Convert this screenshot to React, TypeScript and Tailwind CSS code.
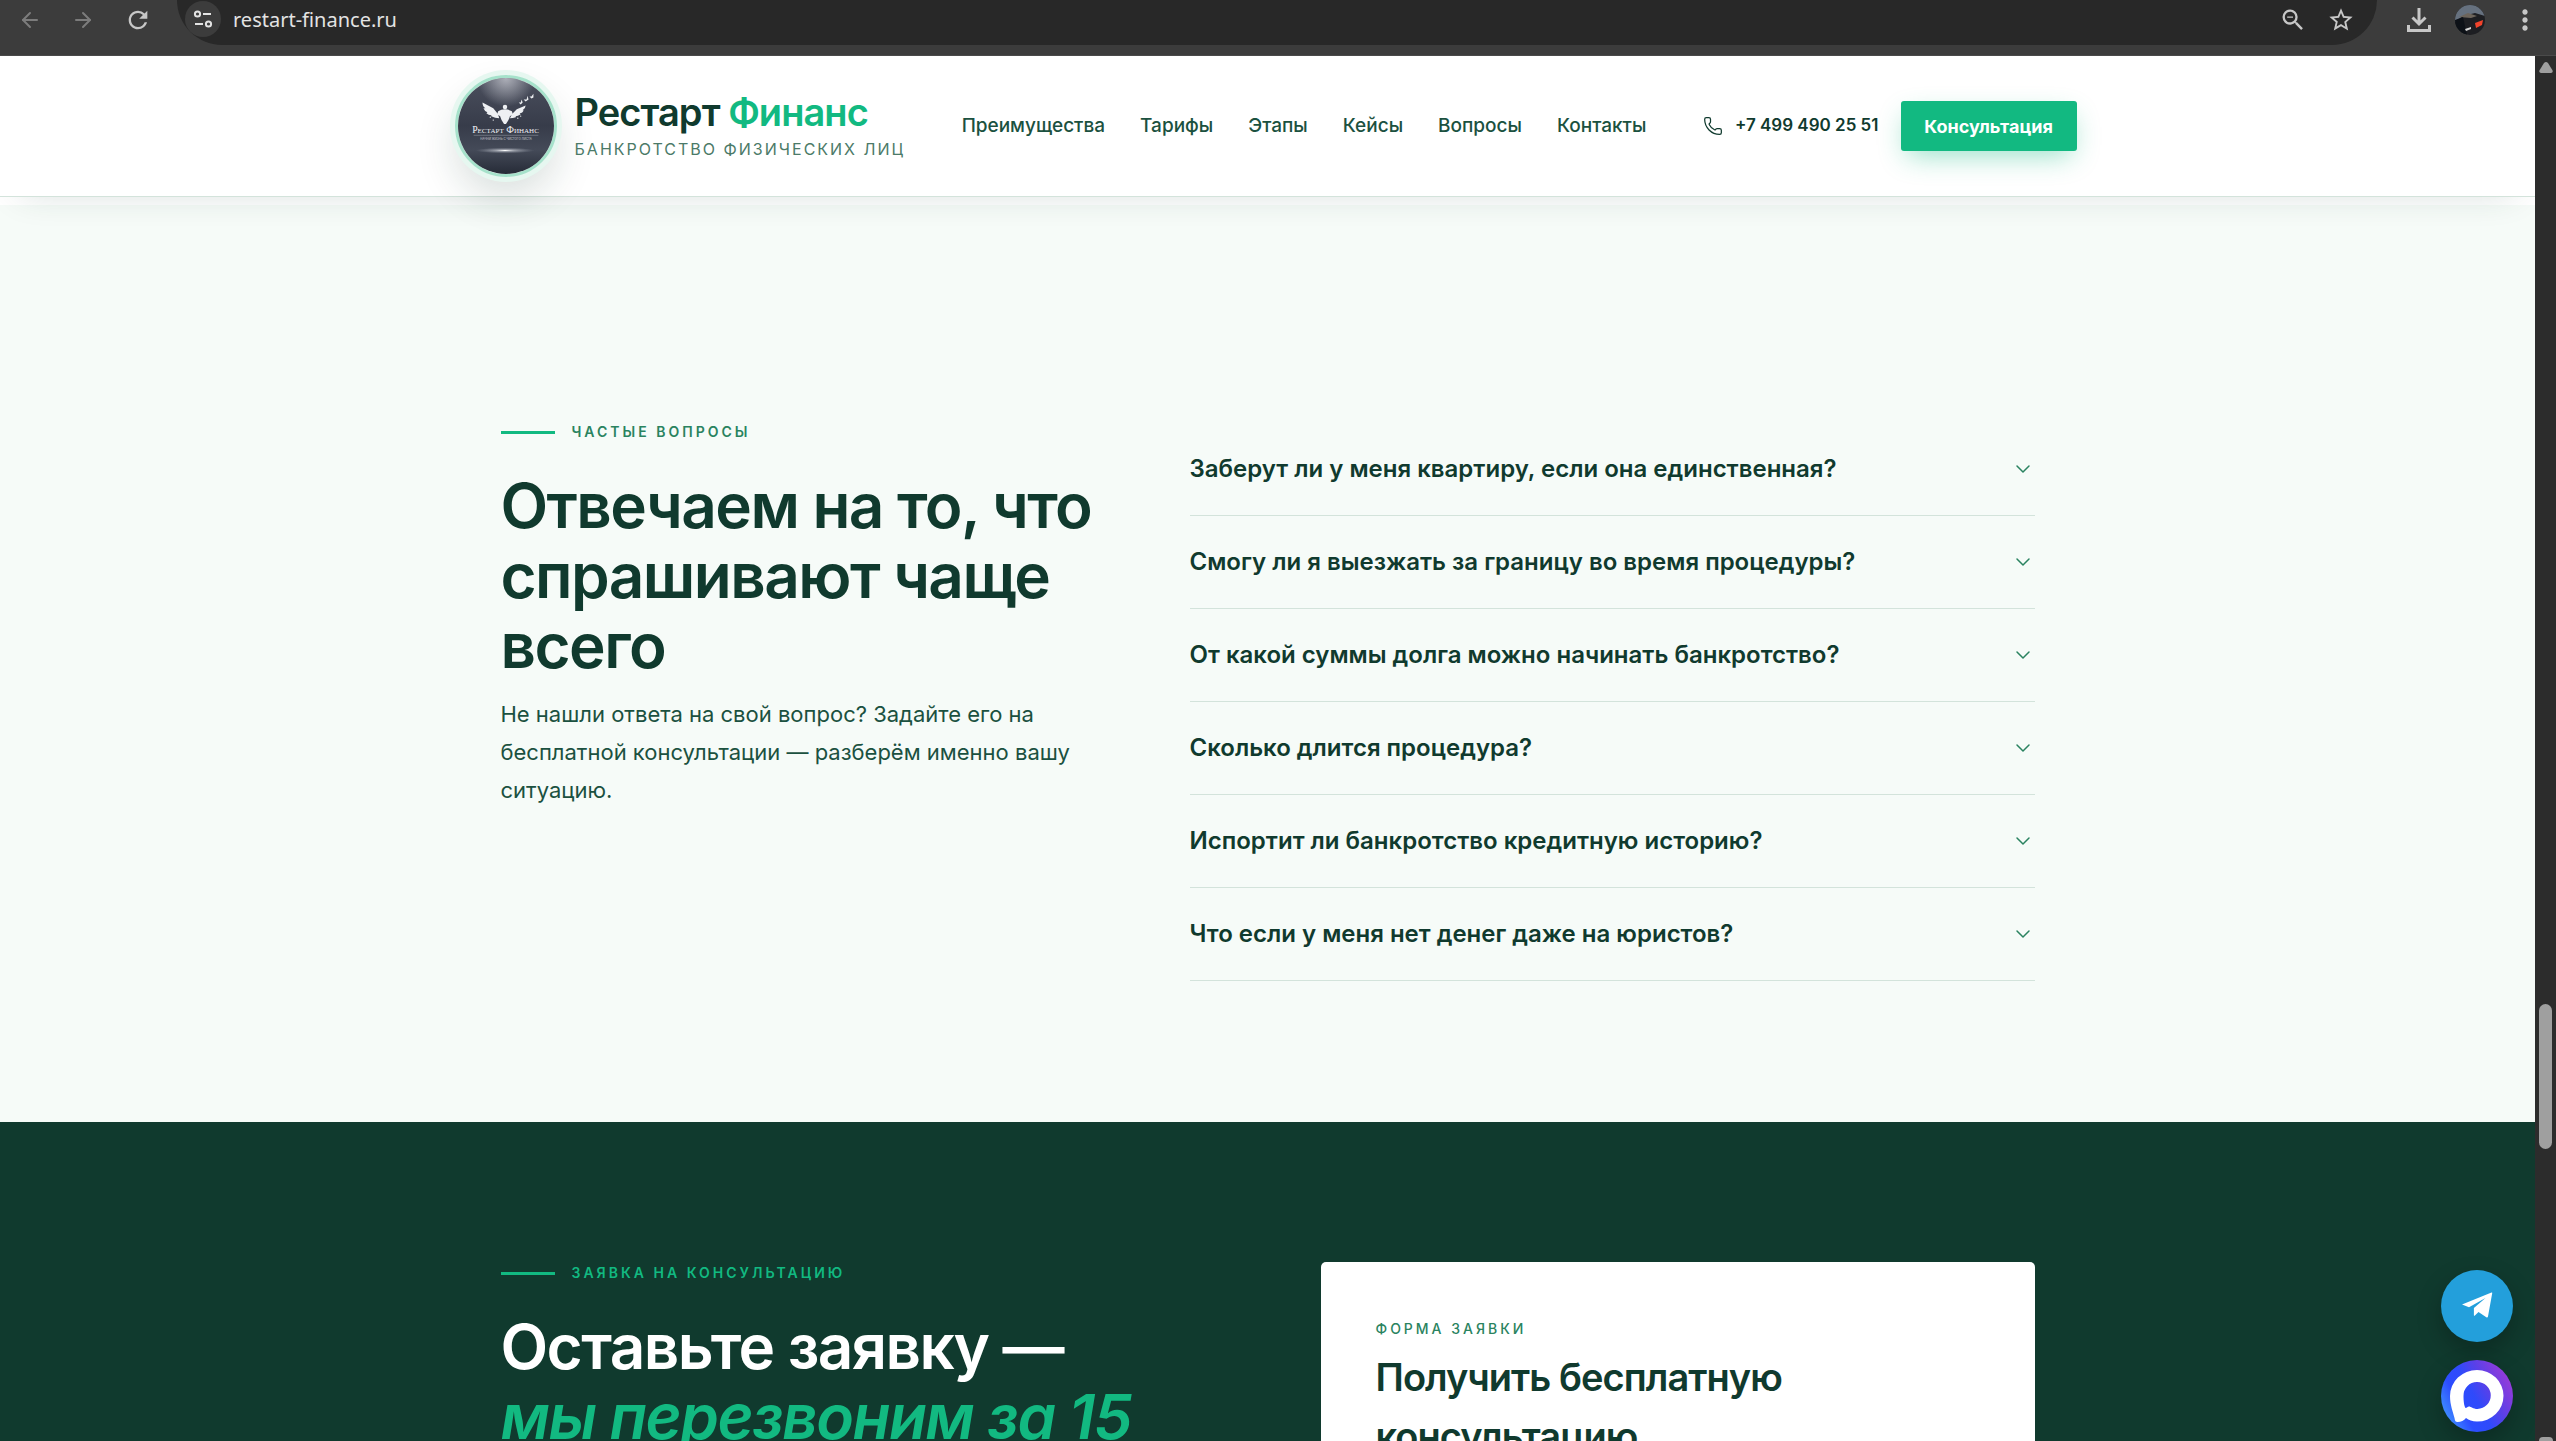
import React, { useState } from 'react'
import { ArrowLeft, ArrowRight, ChevronDown, Phone } from 'lucide-react'
import { MdMoreVert, MdRefresh, MdStarBorder, MdZoomOut } from 'react-icons/md'

const navItems = [
  { href: '#advantages', label: 'Преимущества' },
  { href: '#prices', label: 'Тарифы' },
  { href: '#steps', label: 'Этапы' },
  { href: '#cases', label: 'Кейсы' },
  { href: '#faq', label: 'Вопросы' },
  { href: '#contacts', label: 'Контакты' },
]

const questions = [
  'Заберут ли у меня квартиру, если она единственная?',
  'Смогу ли я выезжать за границу во время процедуры?',
  'От какой суммы долга можно начинать банкротство?',
  'Сколько длится процедура?',
  'Испортит ли банкротство кредитную историю?',
  'Что если у меня нет денег даже на юристов?',
]

function BrowserBar() {
  return (
    <div className="flex h-14 shrink-0 items-start border-b border-[#4a4a4a] bg-[#3c3c3c] text-[#c7c7c7]">
      <div className="flex h-10 w-[177px] shrink-0 items-center gap-[29px] pl-[18px]">
        <button aria-label="Назад" className="text-[#7c7c7c]"><ArrowLeft className="size-6" strokeWidth={2} /></button>
        <button aria-label="Вперёд" className="text-[#7c7c7c]"><ArrowRight className="size-6" strokeWidth={2} /></button>
        <button aria-label="Обновить"><MdRefresh className="size-7" /></button>
      </div>
      <div className="flex h-[45px] flex-1 items-start rounded-b-full bg-[#282828] pr-[22px] pl-2">
        <button aria-label="Сведения о сайте" className="mt-px flex size-9 items-center justify-center rounded-full bg-[#3c3c3c]">
          <svg viewBox="0 0 20 20" className="size-5" fill="none" stroke="#e3e3e3" strokeWidth="2">
            <circle cx="4.5" cy="5" r="2.6" />
            <path d="M10 5h8M2 15h8" />
            <circle cx="15.5" cy="15" r="2.6" />
          </svg>
        </button>
        <input
          aria-label="Адресная строка"
          defaultValue="restart-finance.ru"
          className="ml-3 h-[38px] min-w-0 flex-1 bg-transparent font-['Noto_Sans',sans-serif] text-xl text-[#e3e3e3] outline-none"
        />
        <div className="flex h-10 items-center gap-5">
          <button aria-label="Масштаб"><MdZoomOut className="size-7" /></button>
          <button aria-label="В закладки"><MdStarBorder className="size-7" /></button>
        </div>
      </div>
      <div className="flex h-10 shrink-0 items-center gap-6 pr-[15px] pl-[30px]">
        <button aria-label="Загрузки">
          <svg viewBox="0 0 24 24" className="size-6" fill="none" stroke="currentColor" strokeWidth="3">
            <path d="M12 0v16M5.500 9.500L12 16l6.500-6.500M1.500 17v5.500h21V17" />
          </svg>
        </button>
        <button aria-label="Профиль">
          <svg viewBox="0 0 30 30" className="size-[30px]">
            <defs>
              <clipPath id="avatar"><circle cx="15" cy="15" r="15" /></clipPath>
            </defs>
            <g clipPath="url(#avatar)">
              <rect width="30" height="30" fill="#1d1e22" />
              <path d="M0 0h30v11L20 8 8 11 0 17z" fill="#66717f" />
              <path d="M4 12l9-4 9 3-6 2z" fill="#6d655c" />
              <path d="M0 15l8-3 4 18H0z" fill="#0d1117" />
              <path d="M20 18l8-3-1 5-6 3z" fill="#f0432b" />
              <path d="M10 24l6-2v2l-5 2z" fill="#d7d7d7" />
            </g>
          </svg>
        </button>
        <button aria-label="Меню"><MdMoreVert className="size-8" /></button>
      </div>
    </div>
  )
}

function LogoMark() {
  return (
    <svg viewBox="0 0 98 98" className="size-full">
      <defs>
        <linearGradient id="disc" x1="0" y1="0" x2="0" y2="1">
          <stop offset="0" stopColor="#4b4f5d" />
          <stop offset="0.5" stopColor="#373c4a" />
          <stop offset="0.75" stopColor="#444a58" />
          <stop offset="1" stopColor="#262b37" />
        </linearGradient>
        <radialGradient id="beam" cx="0.5" cy="0" r="0.3">
          <stop offset="0" stopColor="#b9bbc4" stopOpacity="0.9" />
          <stop offset="1" stopColor="#b9bbc4" stopOpacity="0" />
        </radialGradient>
        <radialGradient id="flare">
          <stop offset="0" stopColor="#fff" />
          <stop offset="0.3" stopColor="#d6d9e0" stopOpacity="0.6" />
          <stop offset="1" stopColor="#9aa0ad" stopOpacity="0" />
        </radialGradient>
      </defs>
      <circle cx="49" cy="49" r="49" fill="url(#disc)" />
      <circle cx="49" cy="49" r="49" fill="url(#beam)" />
      <ellipse cx="48" cy="74" rx="30" ry="3" fill="url(#flare)" />
      <g fill="#eef0f3">
        <circle cx="48" cy="29.500" r="2.300" />
        <path d="M41 34q3-2 7-2t7 2l1 3-3 2q-1 4-4 8h-2q-3-4-4-8l-3-2z" />
        <path d="M41 37L36 31 25 25q0 4 3 6l-2 0q1 3 4 4l-1 1q2 2 5 2l0 1q4 2 8 2z" />
        <path d="M55 37l5-5 9-4q0 3-3 5l1 0q-1 3-4 3l1 1q-3 2-5 2l0 1q-3 1-6 1z" />
        <path d="M62 25l2 0 1-3 1 3-2 2zM67 22l3 0 1-4 1 4-3 2zM73 19l2 0 2-3 0 4-2 1z" />
        <circle cx="33" cy="40" r="0.7" />
        <circle cx="36" cy="43" r="0.7" />
        <circle cx="61" cy="41" r="0.7" />
        <circle cx="64" cy="39" r="0.6" />
      </g>
      <text x="48.500" y="56" textAnchor="middle" fontSize="10" fill="#f1f2f5" className="font-['Liberation_Serif',serif]" style={{ fontVariant: 'small-caps' }}>Рестарт Финанс</text>
      <path d="M16 58.500h66" stroke="#8d929d" strokeWidth="0.6" />
      <text x="49" y="63" textAnchor="middle" fontSize="3" fill="#c9ccd3">НАЧНИ ЖИЗНЬ С ЧИСТОГО ЛИСТА</text>
    </svg>
  )
}

function Header() {
  return (
    <header className="relative z-10 border-b border-[#d3e3db] bg-white shadow-[0_14px_36px_-20px_rgba(16,58,46,0.2)]">
      <div className="mx-auto flex h-[140px] max-w-[1626px] items-center pr-1">
        <a href="#top" className="flex items-center gap-[18px]">
          <div className="size-[102px] rounded-full border-3 border-[#a6e2cb] shadow-[0_0_0_5px_#e6f7f0,0_20px_40px_rgba(16,58,46,0.16)]">
            <LogoMark />
          </div>
          <div>
            <div className="text-[38px] leading-[46px] font-semibold tracking-tight text-[#103a2e]">
              Рестарт <span className="text-[#12b981]">Финанс</span>
            </div>
            <div className="text-[16px] leading-[28px] tracking-[2px] text-[#4b7a68] uppercase">Банкротство физических лиц</div>
          </div>
        </a>
        <nav className="ml-auto flex gap-[35px] text-[19px] font-medium text-[#1b5140]">
          {navItems.map((item) => (
            <a key={item.href} href={item.href}>{item.label}</a>
          ))}
        </nav>
        <a href="tel:+74994902551" className="ml-auto flex items-center gap-3 text-[17px] font-semibold text-[#103a2e]">
          <Phone className="size-5" strokeWidth={1.5} />
          +7 499 490 25 51
        </a>
        <a href="#request" className="ml-[22px] flex h-[50px] w-44 items-center justify-center rounded-[3px] bg-[#12b981] text-[18px] font-bold text-white shadow-[0_10px_28px_-6px_rgba(18,185,129,0.45)]">
          Консультация
        </a>
      </div>
    </header>
  )
}

function Eyebrow({ children, className }: { children: React.ReactNode; className: string }) {
  return (
    <div className={`flex items-center gap-[17px] text-[14px] leading-[22px] font-semibold tracking-[3px] uppercase ${className}`}>
      <span className="h-[3px] w-[54px] bg-[#12b981]" />
      {children}
    </div>
  )
}

function Faq() {
  const [open, setOpen] = useState<number | null>(null)

  return (
    <section id="faq" className="bg-[#f6fbf8] pt-[216px] pb-[141px]">
      <div className="mx-auto flex max-w-[1534px] justify-between">
        <div className="w-[610px]">
          <Eyebrow className="text-[#2a8360]">Частые вопросы</Eyebrow>
          <h2 className="mt-7 text-[62px] leading-[70px] font-semibold tracking-tight text-[#103a2e]">
            Отвечаем на то, что<br />спрашивают чаще<br />всего
          </h2>
          <p className="mt-3.5 text-[22px] leading-[38px] text-[#1b5140]">
            Не нашли ответа на свой вопрос? Задайте его на<br />
            бесплатной консультации — разберём именно вашу<br />
            ситуацию.
          </p>
        </div>
        <div className="w-[845px] pt-0.5">
          {questions.map((question, i) => (
            <button
              key={question}
              aria-expanded={open === i}
              onClick={() => setOpen(open === i ? null : i)}
              className="flex h-[93px] w-full items-center justify-between border-b border-[#d3e3db] text-left text-[24px] font-semibold text-[#103a2e]"
            >
              {question}
              <ChevronDown className={`size-6 text-[#2a8360] ${open === i ? 'rotate-180' : ''}`} strokeWidth={1.5} />
            </button>
          ))}
        </div>
      </div>
    </section>
  )
}

function Request() {
  return (
    <section id="request" className="min-h-0 flex-1 overflow-hidden bg-[#103a2e] pt-[140px]">
      <div className="mx-auto flex max-w-[1534px] justify-between">
        <div>
          <Eyebrow className="text-[#12b981]">Заявка на консультацию</Eyebrow>
          <h2 className="mt-7 text-[62px] leading-[70px] font-semibold tracking-tight text-white">
            Оставьте заявку —<br />
            <em className="text-[#12b981]">мы перезвоним за 15</em>
          </h2>
        </div>
        <form className="w-[714px] rounded-[5px] bg-white px-[55px] py-14">
          <div className="text-[14px] leading-[22px] font-medium tracking-[3px] text-[#2a8360] uppercase">Форма заявки</div>
          <h3 className="mt-2 text-[38px] leading-[59px] font-semibold tracking-tight text-[#103a2e]">
            Получить бесплатную<br />консультацию
          </h3>
        </form>
      </div>
    </section>
  )
}

function Messengers() {
  return (
    <div className="absolute right-[22px] bottom-[9px] z-20 flex flex-col gap-[18px]">
      <a href="#telegram" aria-label="Telegram" className="size-[72px] rounded-full bg-[#239fdb] shadow-[0_10px_24px_rgba(0,0,0,0.25)]">
        <svg viewBox="0 0 72 72" className="size-full" fill="#fff">
          <path d="M21 34.500L50.500 22.500q1-.3.700.8L47 46.500q-.4 1.600-1.700.7L37.500 42l-3.600 3.500q-1 .8-1-.6V38L44.500 28 28 37.200z" />
        </svg>
      </a>
      <a href="#max" aria-label="MAX" className="size-[72px] rounded-full shadow-[0_10px_24px_rgba(0,0,0,0.25)]">
        <svg viewBox="0 0 72 72" className="size-full">
          <defs>
            <linearGradient id="max" x1="0" y1="0.85" x2="1" y2="0.3">
              <stop offset="0" stopColor="#45a2ff" />
              <stop offset="0.3" stopColor="#2c4dff" />
              <stop offset="0.5" stopColor="#2f4afb" />
              <stop offset="0.7" stopColor="#5a40e8" />
              <stop offset="1" stopColor="#9a3ad8" />
            </linearGradient>
          </defs>
          <circle cx="36" cy="36" r="36" fill="url(#max)" />
          <path fill="#fff" fillRule="evenodd" d="M36 10a26.500 25.800 0 1 1 0 51.600c-5 0-8-1.600-11-3.600-2 2.500-5 4-8.500 4-2 0-2.500-1-3-4-1.500-6-4.500-13-4.500-22A27 26 0 0 1 36 10zM36 22a13.500 13.500 0 0 0-13.500 14c0 4 .5 10 2 12 1.500 0 2-1.500 3.500-1.500 2 0 4 2.500 8.500 2.500A13.500 13.500 0 0 0 36 22z" />
        </svg>
      </a>
    </div>
  )
}

function Scrollbar() {
  return (
    <div className="flex w-[21px] shrink-0 flex-col items-center overflow-hidden bg-[#2c2c2c]">
      <svg viewBox="0 0 14 11" className="mt-1.5 h-[11px] w-3.5 shrink-0" fill="#9f9f9f">
        <path d="M7 0q1 0 2 1l4.600 7.500Q14 11 12 11H2Q0 11 .4 8.500L5 1Q6 0 7 0z" />
      </svg>
      <div className="mt-[931px] h-[145px] w-[13px] shrink-0 rounded-full bg-[#9f9f9f]" />
      <div className="mt-auto h-1 w-3.5 shrink-0 rounded-t-sm bg-[#9f9f9f]" />
    </div>
  )
}

export default function App() {
  return (
    <div className="flex h-screen flex-col overflow-hidden font-['Inter',sans-serif]">
      <BrowserBar />
      <div className="flex min-h-0 flex-1">
        <div className="relative flex min-w-0 flex-1 flex-col overflow-hidden">
          <Header />
          <div className="h-2 shrink-0 bg-white" />
          <Faq />
          <Request />
          <Messengers />
        </div>
        <Scrollbar />
      </div>
    </div>
  )
}
